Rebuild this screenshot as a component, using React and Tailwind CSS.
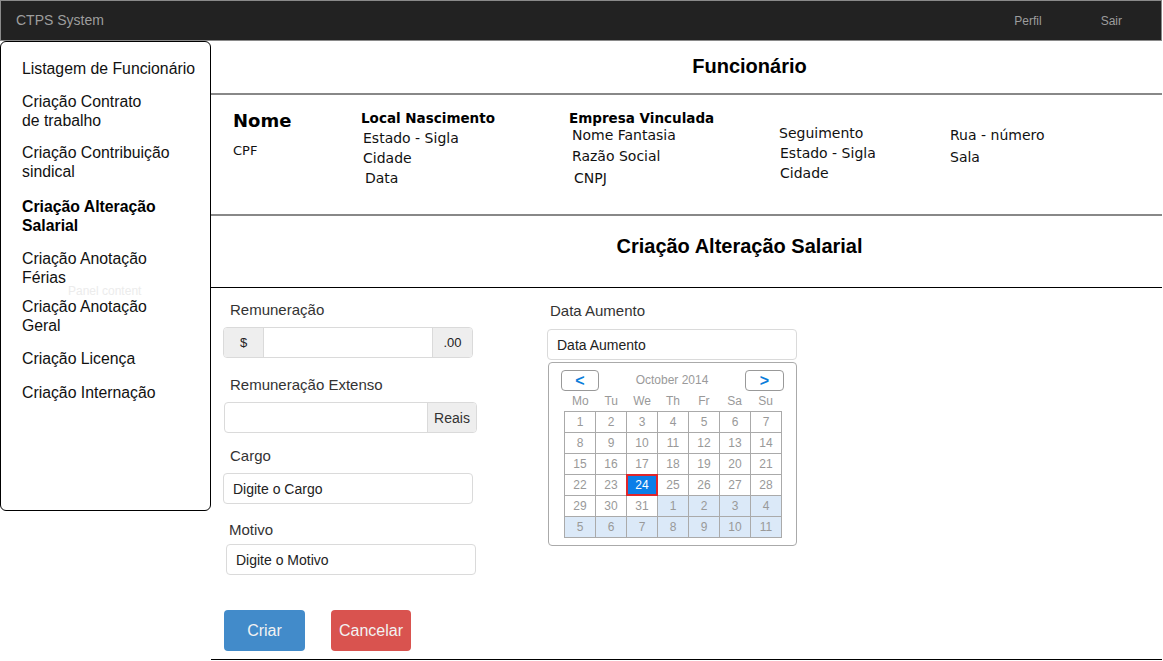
import React from 'react';

const MENU = [
  { lines: ['Listagem de Funcionário'], mt: 0 },
  { lines: ['Criação Contrato', 'de trabalho'], mt: 14 },
  { lines: ['Criação Contribuição', 'sindical'], mt: 13 },
  { lines: ['Criação Alteração', 'Salarial'], mt: 16, active: true },
  { lines: ['Criação Anotação', 'Férias'], mt: 14 },
  { lines: ['Criação Anotação', 'Geral'], mt: 10 },
  { lines: ['Criação Licença'], mt: 14 },
  { lines: ['Criação Internação'], mt: 15 },
];

const WEEK = ['Mo', 'Tu', 'We', 'Th', 'Fr', 'Sa', 'Su'];

function buildDays() {
  const cells = [];
  for (let d = 1; d <= 31; d++) cells.push({ d, next: false });
  for (let d = 1; cells.length < 42; d++) cells.push({ d, next: true });
  return cells;
}

function Sidebar() {
  return (
    <aside className="relative h-[470px] w-[211px] shrink-0 rounded-[6px] border border-black pl-[21px] pt-[17px] text-[15.8px] leading-[19px] text-[#111]">
      {MENU.map((item, i) => (
        <div
          key={i}
          style={{ marginTop: item.mt }}
          className={item.active ? 'font-bold text-black' : ''}
        >
          {item.lines.map((l, j) => (
            <div key={j}>{l}</div>
          ))}
        </div>
      ))}
      <span className="absolute left-[67px] top-[240px] text-[12px] text-[#ececec]">Panel content</span>
    </aside>
  );
}

function InfoSection() {
  const dv = "font-['DejaVu_Sans',Verdana,sans-serif]";
  return (
    <div className={`flex h-[121px] border-b-2 border-[#888] pl-[22px] text-[14px] leading-[20px] text-[#111] ${dv}`}>
      <div className="w-[128px] pt-[14px]">
        <div className="text-[18px] font-bold leading-[24px] text-black">Nome</div>
        <div className="mt-[8px] text-[13px]">CPF</div>
      </div>
      <div className="w-[208px] pt-[13px]">
        <div className="text-[13.5px] font-bold text-black">Local Nascimento</div>
        <div className="pl-[2px]">Estado - Sigla</div>
        <div className="pl-[2px]">Cidade</div>
        <div className="pl-[4px]">Data</div>
      </div>
      <div className="w-[210px] pt-[13px]">
        <div className="text-[13.5px] font-bold text-black">Empresa Vinculada</div>
        <div className="-mt-[3px] pl-[3px]">Nome Fantasia</div>
        <div className="mt-[1px] pl-[3px]">Razão Social</div>
        <div className="mt-[2px] pl-[5px]">CNPJ</div>
      </div>
      <div className="w-[171px] pt-[28px]">
        <div>Seguimento</div>
        <div className="pl-[1px]">Estado - Sigla</div>
        <div className="pl-[1px]">Cidade</div>
      </div>
      <div className="pt-[30px]">
        <div>Rua - número</div>
        <div className="mt-[2px]">Sala</div>
      </div>
    </div>
  );
}

function DatePicker() {
  const days = buildDays();
  return (
    <div className="ml-[1px] mt-[2px] w-[249px] rounded-[4px] border border-[#aaa] bg-white px-[12px] pb-[7px] pt-[7px]">
      <div className="flex h-[21px] items-center justify-between">
        <button className="flex h-[21px] w-[38px] items-center justify-center rounded-[4px] border border-[#999] bg-white text-[16px] font-bold leading-none text-[#0b7dda]">
          &lt;
        </button>
        <span className="-mt-[2px] text-[12px] text-[#9a9a9a]">October 2014</span>
        <button className="flex h-[21px] w-[39px] items-center justify-center rounded-[4px] border border-[#999] bg-white text-[16px] font-bold leading-none text-[#0b7dda]">
          &gt;
        </button>
      </div>
      <div className="ml-[3px] grid h-[20px] w-[218px] grid-cols-7 items-center px-px text-center text-[12px] text-[#999]">
        {WEEK.map((w) => (
          <span key={w}>{w}</span>
        ))}
      </div>
      <div className="ml-[3px] grid w-[218px] grid-cols-7 gap-px bg-[#aaa] p-px text-center text-[12px] leading-[20px]">
        {days.map((c, i) => {
          const selected = !c.next && c.d === 24;
          let cls = 'h-[20px] bg-white text-[#999]';
          if (c.next) cls = 'h-[20px] bg-[#dbe9f8] text-[#999]';
          if (selected)
            cls = 'relative z-10 h-[20px] bg-[#0b7ee8] text-white outline-2 outline-[#e0262b] -outline-offset-1';
          return (
            <span key={i} className={cls}>
              {c.d}
            </span>
          );
        })}
      </div>
    </div>
  );
}

function FormSection() {
  const input = 'h-[31px] rounded-[4px] border border-[#dadada] bg-white text-[14px] text-[#222]';
  return (
    <div className="flex h-[372px] border-b border-black pl-[12px] text-[15px] leading-[20px] text-[#333]">
      <div className="w-[254px] pt-[12px]">
        <div className="pl-[7px]">Remuneração</div>
        <div className={`mt-[7px] flex w-[250px] overflow-hidden ${input}`}>
          <span className="flex w-[40px] items-center justify-center border-r border-[#dadada] bg-[#eee] text-[13px]">$</span>
          <span className="flex-1" />
          <span className="flex w-[40px] items-center justify-center border-l border-[#dadada] bg-[#eee] text-[13px]">.00</span>
        </div>
        <div className="mt-[17px] pl-[7px]">Remuneração Extenso</div>
        <div className={`ml-[1px] mt-[7px] flex w-[253px] overflow-hidden ${input}`}>
          <span className="flex-1" />
          <span className="flex w-[49px] items-center justify-center border-l border-[#dadada] bg-[#eee] text-[#333]">Reais</span>
        </div>
        <div className="mt-[13px] pl-[7px]">Cargo</div>
        <div className={`mt-[7px] flex w-[250px] items-center pl-[9px] ${input}`}>Digite o Cargo</div>
        <div className="mt-[16px] pl-[6px]">Motivo</div>
        <div className={`ml-[3px] mt-[4px] flex w-[250px] items-center pl-[9px] ${input}`}>Digite o Motivo</div>
        <div className="mt-[35px] flex">
          <button className="ml-[1px] h-[41px] w-[81px] rounded-[4px] bg-[#428bca] text-[16px] text-[#f2f2f2]">Criar</button>
          <button className="ml-[26px] h-[41px] w-[80px] rounded-[4px] bg-[#d9534f] text-[16px] text-[#f2f2f2]">Cancelar</button>
        </div>
      </div>
      <div className="ml-[70px] w-[252px] pt-[13px]">
        <div className="pl-[3px]">Data Aumento</div>
        <div className={`mt-[8px] flex h-[30px] w-[250px] items-center pl-[9px] ${input}`}>Data Aumento</div>
        <DatePicker />
      </div>
    </div>
  );
}

export default function App() {
  return (
    <div className="min-h-screen w-[1162px] bg-white font-['Liberation_Sans',Arial,sans-serif]">
      {/* Top bar */}
      <header className="flex h-[41px] items-center justify-between border border-[#8a8a8a] bg-[#222] text-[#9d9d9d]">
        <span className="pl-[15px] text-[14px]">CTPS System</span>
        <nav className="flex pr-[39px] text-[12px]">
          <span>Perfil</span>
          <span className="ml-[59px]">Sair</span>
        </nav>
      </header>

      <div className="flex items-start">
        <Sidebar />
        <main className="flex-1">
          <div className="h-[54px] border-b-2 border-[#888] pl-[126px] pt-[13px] text-center text-[20px] font-bold leading-[24px] text-black">
            Funcionário
          </div>
          <InfoSection />
          <div className="h-[72px] border-b border-black pl-[106px] pt-[18px] text-center text-[20px] font-bold leading-[24px] text-black">
            Criação Alteração Salarial
          </div>
          <FormSection />
        </main>
      </div>
    </div>
  );
}
